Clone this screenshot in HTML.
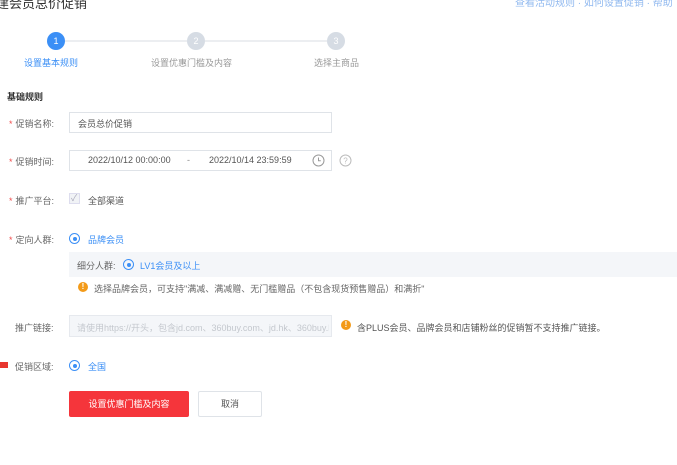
<!DOCTYPE html>
<html><head><meta charset="utf-8"><style>
*{margin:0;padding:0;box-sizing:border-box}
body{width:677px;height:465px;background:#fff;position:relative;overflow:hidden;font-family:"Liberation Sans","Noto Sans CJK SC",sans-serif;font-size:9px;color:#555}
.a{position:absolute;white-space:nowrap}
.lbl{position:absolute;white-space:nowrap;color:#666}
.lbl b{color:#f04b4b;font-weight:normal;margin-right:3px}
.inp{position:absolute;border:1px solid #dfe3e8;background:#fff}
.circ{position:absolute;width:18px;height:18px;border-radius:50%;color:#fff;text-align:center;line-height:18px;font-size:9px}
.radio{position:absolute;width:11px;height:11px;border-radius:50%;border:1px solid #3b8ff6}
.radio:after{content:"";position:absolute;left:2.5px;top:2.5px;width:4px;height:4px;border-radius:50%;background:#3b8ff6}
.warn{position:absolute;width:10px;height:10px;border-radius:50%;background:#f39a18;color:#fff;font-size:8px;text-align:center;line-height:10px;font-weight:bold}
.blue{color:#3b8ff6}
</style></head><body>
<div class="a" style="left:-4px;top:-7px;font-size:13px;color:#333">建会员总价促销</div>
<div class="a blue" style="left:515px;top:-6px;font-size:10px;color:#8fb8ef">查看活动规则 · 如何设置促销 · 帮助</div>

<div class="a" style="left:65px;top:40px;width:122px;height:2px;background:#eceef1"></div>
<div class="a" style="left:205px;top:40px;width:122px;height:2px;background:#eceef1"></div>
<div class="circ" style="left:47px;top:32px;background:#3b8ff6">1</div>
<div class="circ" style="left:187px;top:32px;background:#d6dce4">2</div>
<div class="circ" style="left:327px;top:32px;background:#d6dce4">3</div>
<div class="a blue" style="left:24px;top:56px">设置基本规则</div>
<div class="a" style="left:151px;top:56px;color:#999">设置优惠门槛及内容</div>
<div class="a" style="left:314px;top:56px;color:#999">选择主商品</div>

<div class="a" style="left:7px;top:90px;color:#333;font-weight:bold">基础规则</div>

<div class="lbl" style="left:9px;top:117px"><b>*</b>促销名称:</div>
<div class="inp" style="left:69px;top:112px;width:263px;height:21px"></div>
<div class="a" style="left:78px;top:117px;color:#555">会员总价促销</div>

<div class="lbl" style="left:9px;top:155px"><b>*</b>促销时间:</div>
<div class="inp" style="left:69px;top:150px;width:263px;height:21px"></div>
<div class="a" style="left:88px;top:155px;color:#555">2022/10/12 00:00:00</div>
<div class="a" style="left:187px;top:155px;color:#888">-</div>
<div class="a" style="left:209px;top:155px;color:#555">2022/10/14 23:59:59</div>
<svg class="a" style="left:312px;top:154px" width="13" height="13" viewBox="0 0 13 13"><circle cx="6.5" cy="6.5" r="5.5" fill="none" stroke="#999"/><path d="M6.5 3.5V6.8H8.8" fill="none" stroke="#999"/></svg>
<svg class="a" style="left:339px;top:154px" width="13" height="13" viewBox="0 0 13 13"><circle cx="6.5" cy="6.5" r="5.5" fill="none" stroke="#bbb"/><text x="6.5" y="9.3" font-size="8" text-anchor="middle" fill="#bbb" font-family="Liberation Sans">?</text></svg>

<div class="lbl" style="left:9px;top:194px"><b>*</b>推广平台:</div>
<div class="a" style="left:69px;top:193px;width:11px;height:11px;border:1px solid #dde;background:#f1f3f6"></div>
<div class="a" style="left:71px;top:191px;color:#aab;font-size:9px">✓</div>
<div class="a" style="left:88px;top:194px;color:#555">全部渠道</div>

<div class="lbl" style="left:9px;top:233px"><b>*</b>定向人群:</div>
<div class="radio" style="left:69px;top:233px"></div>
<div class="a blue" style="left:88px;top:233px">品牌会员</div>

<div class="a" style="left:69px;top:252px;width:608px;height:25px;background:#f4f6f9"></div>
<div class="a" style="left:77px;top:259px;color:#666">细分人群:</div>
<div class="radio" style="left:123px;top:259px"></div>
<div class="a blue" style="left:140px;top:259px">LV1会员及以上</div>

<div class="warn" style="left:78px;top:282px">!</div>
<div class="a" style="left:94px;top:282px;color:#666">选择品牌会员，可支持"满减、满减赠、无门槛赠品（不包含现货预售赠品）和满折"</div>

<div class="lbl" style="left:15px;top:321px">推广链接:</div>
<div class="inp" style="left:69px;top:315px;width:263px;height:22px;background:#f4f6f9;border-color:#e6e9ee"></div>
<div class="a" style="left:77px;top:321px;color:#c4c8ce;width:252px;overflow:hidden">请使用https://开头，包含jd.com、360buy.com、jd.hk、360buy.l</div>
<div class="warn" style="left:341px;top:320px">!</div>
<div class="a" style="left:357px;top:321px;color:#555">含PLUS会员、品牌会员和店铺粉丝的促销暂不支持推广链接。</div>

<div class="a" style="left:0;top:362px;width:8px;height:6px;background:#e8362f"></div>
<div class="lbl" style="left:15px;top:360px">促销区域:</div>
<div class="radio" style="left:69px;top:360px"></div>
<div class="a blue" style="left:88px;top:360px">全国</div>

<div class="a" style="left:69px;top:391px;width:120px;height:26px;background:#f5353b;color:#fff;text-align:center;line-height:26px;border-radius:2px">设置优惠门槛及内容</div>
<div class="a" style="left:198px;top:391px;width:64px;height:26px;border:1px solid #dfe3e8;color:#555;text-align:center;line-height:24px;border-radius:2px">取消</div>
</body></html>
